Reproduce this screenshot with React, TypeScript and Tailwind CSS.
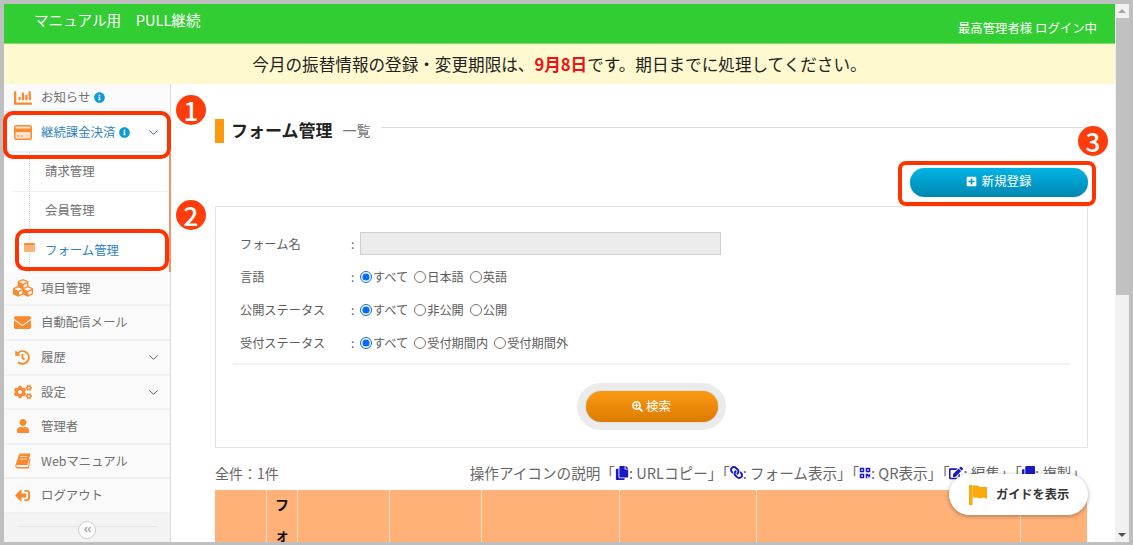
import React from "react";
import {
  FaChartBar, FaCubes, FaEnvelope, FaHistory, FaCogs, FaUser,
  FaSignOutAlt, FaInfoCircle, FaPlusSquare, FaSearchPlus, FaCopy, FaLink, FaQrcode, FaEdit,
  FaClone, FaAngleDoubleLeft,
} from "react-icons/fa";
import { ChevronDown } from "lucide-react";

const font = { fontFamily: '"Noto Sans CJK JP","Noto Sans",sans-serif' };

function Row({ h, icon, label, chevron, info }: { h: string; icon: React.ReactNode; label: string; chevron?: boolean; info?: boolean }) {
  return (
    <div className={`${h} flex items-center border-b-2 border-[#f1f1f1] text-[12.4px] text-[#707070]`}>
      <span className="w-[37px] flex justify-center text-[#fb8a2e]">{icon}</span>
      <span>{label}</span>
      {info && <FaInfoCircle className="ml-[4px] text-[#0b9bdc] text-[11px]" />}
      {chevron && <ChevronDown className="ml-auto mr-[9px] text-[#555]" size={15} strokeWidth={1.5} />}
    </div>
  );
}

function Radios({ label, options }: { label: string; options: string[] }) {
  return (
    <div className="h-[33px] flex items-center text-[12.2px] text-[#5c5c5c]">
      <span className="w-[111px]">{label}</span>
      <span className="w-[9px]">:</span>
      {options.map((o, i) => (
        <label key={o} className="flex items-center mr-[6px]">
          <input type="radio" name={label} defaultChecked={i === 0} className="m-0 w-[12px] h-[12px] accent-[#0a6cf5]" />
          <span className="ml-[1px]">{o}</span>
        </label>
      ))}
    </div>
  );
}

function Circle({ n, cls }: { n: string; cls: string }) {
  return (
    <div className={`absolute w-[30px] h-[30px] rounded-full bg-[#ff3d0a] text-white text-[26px] font-medium flex items-center justify-center leading-none ${cls}`}>{n}</div>
  );
}

function CardIcon() {
  return (
    <svg width="18" height="15" viewBox="0 0 18 15">
      <rect x="0.75" y="0.75" width="16.5" height="13.5" rx="1.5" fill="#ffe3cc" stroke="#fb8a2e" strokeWidth="1.5" />
      <rect x="1" y="3.5" width="16" height="3.5" fill="#fb8a2e" />
      <path d="M3 11h2.5M6.5 11H9" stroke="#fb8a2e" strokeWidth="1" />
    </svg>
  );
}

function BookIcon() {
  return (
    <svg width="16" height="16" viewBox="0 0 16 16">
      <path d="M4.5 0.5H15.5L12.5 12H2.2C1.2 12 1 13 1.5 13.5C2 14 2.6 14 3.2 14H13L14.6 5.5L15.5 6L13.8 15.5H3C1.2 15.5 0 14 0.4 12Z" fill="#fb8a2e" />
      <path d="M5.5 3.5H12.5M5 6H12" stroke="#ffd9b8" strokeWidth="1" />
    </svg>
  );
}

function FlagIcon() {
  return (
    <svg width="18" height="20" viewBox="0 0 18 20" className="mr-[9px]">
      <path d="M0 0H3.5V20H0Z" fill="#fba90a" />
      <path d="M3.5 0.5H9L10.5 2H18V14L15 12.5L11 13.5L8 12.5H3.5Z" fill="#fba90a" />
    </svg>
  );
}

const cols = ["w-[52px]", "w-[31px]", "w-[92px]", "w-[92px]", "w-[138px]", "w-[137px]", "w-[264px]", "w-[66px]"];

export default function App() {
  return (
    <div style={font} className="relative w-[1133px] h-[545px] overflow-hidden bg-[#bfbfbf] pt-[4px] pl-[4px] pr-[4px] pb-[3px] flex">
      <div className="flex-1 min-w-0 flex flex-col bg-white">
        <header className="h-[40px] shrink-0 bg-[#32cd32] border-b border-[#7fdc6c] flex justify-between text-white">
          <div className="pl-[30px] pt-[6px] text-[14.6px] leading-[20px]">マニュアル用　PULL継続</div>
          <div className="pr-[18px] pt-[15px] text-[12.4px] leading-[18px]">最高管理者様 ログイン中</div>
        </header>
        <div className="h-[40px] shrink-0 bg-[#fef9cf] flex items-center justify-center text-[16.6px] text-[#222]">
          今月の振替情報の登録・変更期限は、<span className="text-[#f01010] font-bold">9月8日</span>です。期日までに処理してください。
        </div>
        <div className="flex-1 min-h-0 flex">
          <aside className="w-[167px] shrink-0 bg-[#fafafa] border-r border-[#dcdcdc] flex flex-col">
            <Row h="h-[29px]" icon={<FaChartBar size={18} />} label="お知らせ" info />
            <div className="h-[40px] bg-white flex items-center border-b-2 border-[#f1f1f1] text-[12.4px] text-[#2f7fc4]">
              <span className="w-[37px] flex justify-center"><CardIcon /></span>
              <span>継続課金決済</span>
              <FaInfoCircle className="ml-[4px] text-[#0b9bdc] text-[11px]" />
              <ChevronDown className="ml-auto mr-[9px] text-[#2a5d92]" size={15} strokeWidth={1.5} />
            </div>
            <div className="relative bg-white border-r-2 border-[#f2926b] mr-[-1px] text-[12.4px] text-[#707070]">
              <div className="absolute left-[25px] top-0 bottom-0 border-l border-dotted border-[#bcd3ea]" />
              <div className="h-[39px] pb-[2px] ml-[8px] flex items-center pl-[33px] border-b border-[#f1f1f1]">請求管理</div>
              <div className="h-[39px] pb-[3px] ml-[8px] flex items-center pl-[33px]">会員管理</div>
              <div className="h-[41px] pb-[3px] ml-[8px] flex items-center pl-[33px] text-[#2f7fc4]">フォーム管理</div>
              <span className="absolute left-[20px] top-[90px] w-[11px] h-[9px] rounded-[1px] bg-[#fdb27a] border-t-2 border-[#fb8a2e]" />
            </div>
            <Row h="h-[34px]" icon={<FaCubes size={20} />} label="項目管理" />
            <Row h="h-[35px]" icon={<FaEnvelope size={17} />} label="自動配信メール" />
            <Row h="h-[35px] pb-[1px]" icon={<FaHistory size={15} />} label="履歴" chevron />
            <Row h="h-[34px]" icon={<FaCogs size={18} />} label="設定" chevron />
            <Row h="h-[35px] pb-[1px]" icon={<FaUser size={14} />} label="管理者" />
            <Row h="h-[34px]" icon={<BookIcon />} label="Webマニュアル" />
            <Row h="h-[35px] pb-[1px]" icon={<FaSignOutAlt size={15} className="-scale-x-100" />} label="ログアウト" />
            <div className="relative flex-1 flex items-center justify-center bg-[#f3f3f3]">
              <div className="absolute left-[13px] right-[13px] top-[12px] border-t border-[#e4e4e4]" />
              <span className="relative w-[18px] h-[18px] mt-[3px] rounded-full border border-[#cfcfcf] bg-white text-[#aaa] text-[9px] flex items-center justify-center"><FaAngleDoubleLeft /></span>
            </div>
          </aside>
          <main className="flex-1 min-w-0 pl-[44px] pr-[27px] pt-[35px] flex flex-col">
            <div className="h-[24px] shrink-0 flex items-center">
              <span className="w-[9px] h-[24px] bg-[#fb9a0c] mr-[7px]" />
              <span className="text-[17px] font-bold text-[#222] pb-[2px]">フォーム管理</span>
              <span className="ml-[10px] pb-[2px] text-[14px] text-[#777]">一覧</span>
              <span className="flex-1 ml-[10px] mb-[8px] border-t border-[#dcdcdc]" />
            </div>
            <div className="shrink-0 flex justify-end pt-[25px] pb-[9px]">
              <button className="w-[178px] h-[29px] pb-[2px] rounded-full bg-gradient-to-b from-[#00b4e4] to-[#0186b2] text-white text-[12.5px] flex items-center justify-center shadow-[0_0_1px_#888]">
                <FaPlusSquare className="mr-[4px] text-[11px]" />新規登録
              </button>
            </div>
            <section className="h-[242px] shrink-0 border border-[#e3e3e3] px-[17px] pt-[21px]">
              <div className="h-[33px] flex items-center pl-[7px] text-[12.2px] text-[#5c5c5c]">
                <span className="w-[111px]">フォーム名</span>
                <span className="w-[9px]">:</span>
                <span className="w-[361px] h-[23px] mb-[2px] bg-[#ececec] border border-[#cfcfcf]" />
              </div>
              <div className="pl-[7px]">
                <Radios label="言語" options={["すべて", "日本語", "英語"]} />
                <Radios label="公開ステータス" options={["すべて", "非公開", "公開"]} />
                <Radios label="受付ステータス" options={["すべて", "受付期間内", "受付期間外"]} />
              </div>
              <div className="mt-[3px] border-t-2 border-[#f3f3f3] flex justify-center pt-[18px]">
                <div className="w-[149px] h-[47px] rounded-full bg-[#ebebeb] flex items-center justify-center">
                  <button className="w-[132px] h-[31px] rounded-full bg-gradient-to-b from-[#fb9b13] to-[#dc7a00] text-white text-[12.5px] flex items-center justify-center shadow-[0_0_1px_#777]">
                    <FaSearchPlus className="mr-[3px] text-[11px]" />検索
                  </button>
                </div>
              </div>
            </section>
            <div className="h-[42px] pt-[8px] shrink-0 flex items-center justify-between text-[#666] pr-[2px]">
              <span className="text-[14px]">全件：1件</span>
              <span className="flex items-center text-[14.6px] whitespace-nowrap">
                操作アイコンの説明「<FaCopy className="text-[#1919c8] text-[14px]" />: URLコピー」「<FaLink className="text-[#1919c8] text-[13px] -scale-x-100" />: フォーム表示」「<FaQrcode className="text-[#1919c8] text-[12px]" />: QR表示」「<FaEdit className="text-[#1919c8] text-[14px]" />: 編集」「<FaClone className="text-[#1919c8] text-[13px]" />: 複製」
              </span>
            </div>
            <div className="flex-1 min-h-0 flex overflow-hidden">
              {cols.map((c, i) => (
                <div key={c + i} className={`${c} shrink-0 bg-[#ffb177] ${i < 7 ? "border-r border-[#ffe0c8]" : ""}`}>
                  {i === 1 && <div className="text-center mt-[-1px] text-[14px] font-bold leading-[30px] text-[#111] px-[8px] break-all">フォーム名</div>}
                </div>
              ))}
            </div>
          </main>
        </div>
      </div>
      <div className="w-[14px] shrink-0 bg-[#f1f1f1] flex flex-col items-center">
        <div className="h-[14px] flex items-center justify-center shrink-0">
          <span className="w-0 h-0 border-x-[4px] border-x-transparent border-b-[4px] border-b-[#a3a3a3]" />
        </div>
        <div className="w-[13px] h-[277px] bg-[#c1c1c1] shrink-0" />
        <div className="flex-1" />
        <div className="h-[14px] flex items-center justify-center shrink-0">
          <span className="w-0 h-0 border-x-[4px] border-x-transparent border-t-[4px] border-t-[#505050]" />
        </div>
      </div>

      <div className="absolute left-[949px] top-[474px] w-[139px] h-[41px] rounded-full bg-white shadow-[0_1px_4px_rgba(0,0,0,0.35)] flex items-center pl-[20px] text-[12.2px] font-bold text-[#333]">
        <FlagIcon />ガイドを表示
      </div>

      <div className="absolute left-[3px] top-[111px] w-[168px] h-[48px] rounded-[10px] border-[4px] border-[#ff3300]" />
      <div className="absolute left-[15px] top-[229px] w-[154px] h-[42px] rounded-[10px] border-[4px] border-[#ff3300]" />
      <div className="absolute left-[898px] top-[161px] w-[198px] h-[45px] rounded-[8px] border-[4px] border-[#ff3300]" />
      <Circle n="1" cls="left-[176px] top-[95px]" />
      <Circle n="2" cls="left-[176px] top-[200px]" />
      <Circle n="3" cls="left-[1078px] top-[126px]" />
    </div>
  );
}
